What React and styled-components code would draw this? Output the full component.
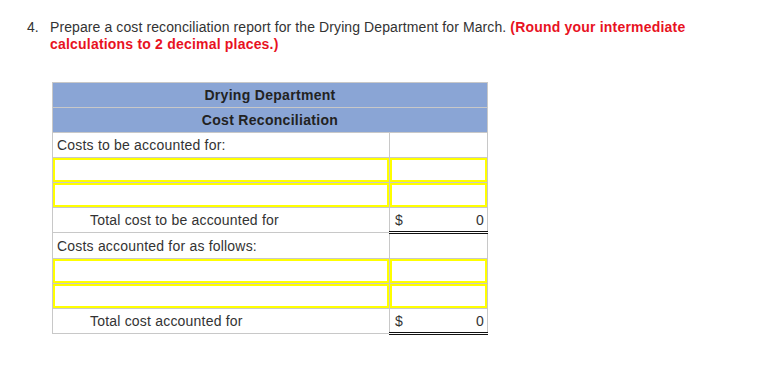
import styled, { createGlobalStyle } from "styled-components";

const GlobalStyle = createGlobalStyle`
  body {
    margin: 0;
    background: #ffffff;
    font-family: "Liberation Sans", Arial, sans-serif;
    color: #333333;
  }
`;

const Page = styled.div`
  padding: 19px 0 0 27px;
`;

const Question = styled.div`
  display: flex;
  font-size: 14px;
  line-height: 17px;
`;

const Num = styled.span`
  width: 23px;
  flex-shrink: 0;
`;

const Prompt = styled.p`
  margin: 0;
  width: 680px;
  letter-spacing: 0.1px;
`;

const Hint = styled.strong`
  color: #e8121f;
  letter-spacing: 0.2px;
`;

const Report = styled.table`
  margin: 29px 0 0 25px;
  width: 435px;
  border-collapse: collapse;
  font-size: 14px;
  letter-spacing: 0.2px;
  table-layout: fixed;
`;

const HeadCell = styled.th`
  height: 24px;
  padding: 0;
  background: #8aa5d5;
  border: 1px solid #c8c8c8;
  border-top-color: ${(p) => (p.$first ? "#c8c8c8" : "#c5d0e6")};
  font-weight: bold;
  letter-spacing: 0.3px;
  color: #222222;
  text-align: center;
`;

const Label = styled.td`
  height: 24px;
  padding: 0 0 0 ${(p) => (p.$indent ? "37px" : "4px")};
  border: 1px solid #c8c8c8;
  white-space: nowrap;
  vertical-align: middle;
`;

const Amount = styled.td`
  height: 24px;
  padding: 0;
  border: 1px solid #c8c8c8;
`;

const TotalCell = styled.td`
  height: 21px;
  padding: 0;
  border: 1px solid #c8c8c8;
  border-top: 1px solid #111111;
  border-bottom: 3px double #111111;
`;

const TotalBox = styled.div`
  display: flex;
  justify-content: space-between;
  padding: 0 3px 0 5px;
`;

const Field = styled.td`
  height: 24px;
  padding: 0;
  border: 1px solid #c8c8c8;
`;

const Input = styled.div`
  box-sizing: border-box;
  height: 24px;
  border: 2px solid #ffff00;
  background: #ffffff;
`;

function InputRow() {
  return (
    <tr>
      <Field>
        <Input />
      </Field>
      <Field>
        <Input />
      </Field>
    </tr>
  );
}

function TotalRow({ label }) {
  return (
    <tr>
      <Label $indent>{label}</Label>
      <TotalCell>
        <TotalBox>
          <span>$</span>
          <span>0</span>
        </TotalBox>
      </TotalCell>
    </tr>
  );
}

export default function App() {
  return (
    <>
      <GlobalStyle />
      <Page>
        <Question>
          <Num>4.</Num>
          <Prompt>
            Prepare a cost reconciliation report for the Drying Department for March.{" "}
            <Hint>(Round your intermediate</Hint>
            <br />
            <Hint>calculations to 2 decimal places.)</Hint>
          </Prompt>
        </Question>
        <Report>
          <colgroup>
            <col style={{ width: 337 }} />
            <col style={{ width: 98 }} />
          </colgroup>
          <thead>
            <tr>
              <HeadCell colSpan={2} $first>
                Drying Department
              </HeadCell>
            </tr>
            <tr>
              <HeadCell colSpan={2}>Cost Reconciliation</HeadCell>
            </tr>
          </thead>
          <tbody>
            <tr>
              <Label>Costs to be accounted for:</Label>
              <Amount />
            </tr>
            <InputRow />
            <InputRow />
            <TotalRow label="Total cost to be accounted for" />
            <tr>
              <Label>Costs accounted for as follows:</Label>
              <Amount />
            </tr>
            <InputRow />
            <InputRow />
            <TotalRow label="Total cost accounted for" />
          </tbody>
        </Report>
      </Page>
    </>
  );
}
